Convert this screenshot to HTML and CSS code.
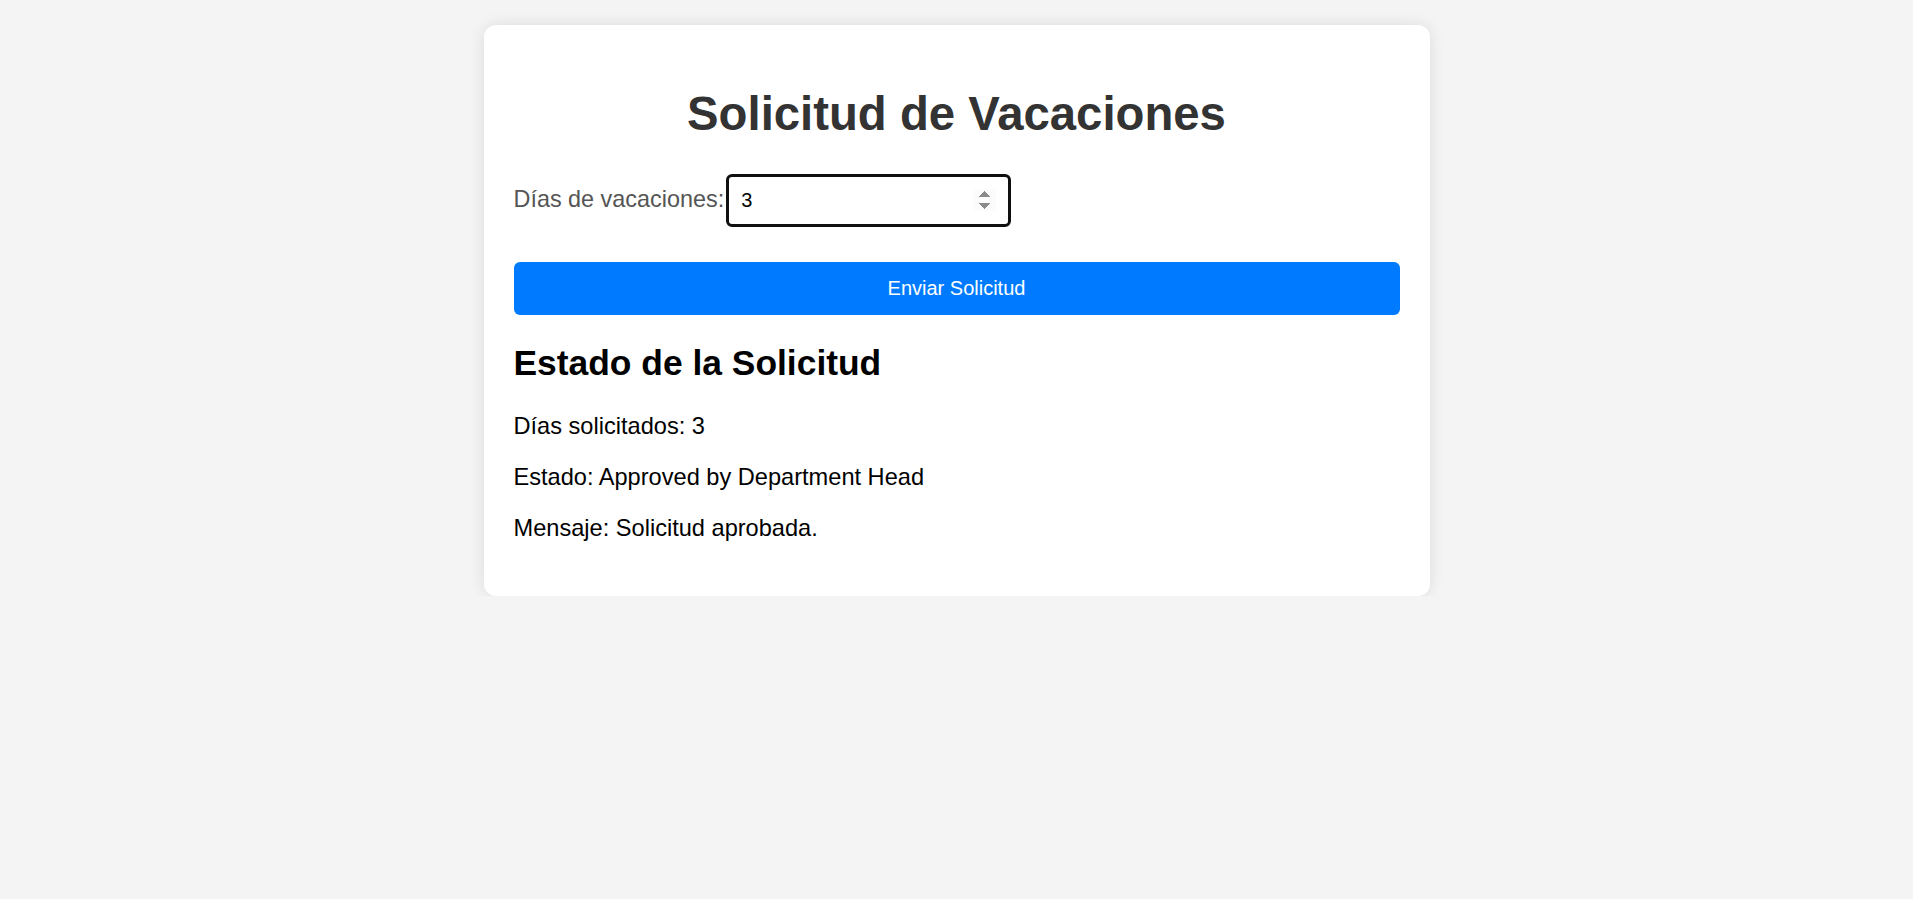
FILE: index.html
```html
<!DOCTYPE html>
<html lang="es">
<head>
<meta charset="utf-8">
<title>Solicitud de Vacaciones</title>
<link rel="stylesheet" href="styles.css">
</head>
<body>
<div class="card">
  <h1 class="title">Solicitud de Vacaciones</h1>
  <form class="form">
    <div class="field">
      <label class="label" for="dias">Días de vacaciones:</label>
      <input class="input" id="dias" type="number" value="3" autofocus>
    </div>
    <button class="submit" type="button">Enviar Solicitud</button>
  </form>
  <div class="status">
    <h2 class="status-title">Estado de la Solicitud</h2>
    <p class="status-line">Días solicitados: 3</p>
    <p class="status-line">Estado: Approved by Department Head</p>
    <p class="status-line">Mensaje: Solicitud aprobada.</p>
  </div>
</div>
</body>
</html>
```
FILE: styles.css
```css
html, body {
  margin: 0;
  padding: 0;
}
body {
  background: #f4f4f4;
  font-family: "Liberation Sans", Arial, sans-serif;
  padding-top: 25px;
}
.card {
  box-sizing: border-box;
  width: 946px;
  margin: 0 auto;
  background: #fff;
  border-radius: 12px;
  box-shadow: 0 0 15px rgba(0, 0, 0, 0.1);
  padding: 30px 30px 30px;
}
.title {
  margin: 31px 0 33px;
  font-size: 47.3px;
  line-height: 55px;
  font-weight: bold;
  color: #333;
  text-align: center;
}
.form {
  margin: 0;
}
.field {
  display: flex;
  align-items: baseline;
  gap: 2px;
}
.label {
  font-size: 23.4px;
  color: #555;
}
.input {
  zoom: 1.5;
  box-sizing: border-box;
  width: 190px;
  font-family: "Liberation Sans", Arial, sans-serif;
  font-size: 13.333px;
  padding: 8px;
  border: 2px solid #101010;
  border-radius: 4px;
  outline: none;
  color: #000;
  caret-color: #000;
  background: #fff;
}
.submit {
  display: block;
  width: 100%;
  height: 53px;
  margin-top: 34.5px;
  border: none;
  border-radius: 6px;
  background: #007bff;
  color: #fff;
  font-family: "Liberation Sans", Arial, sans-serif;
  font-size: 20px;
  cursor: pointer;
}
.status-title {
  margin: 28px 0 29px;
  font-size: 35.4px;
  line-height: 41px;
  font-weight: bold;
  color: #000;
}
.status-line {
  margin: 24px 0;
  font-size: 23.6px;
  line-height: 27.2px;
  color: #000;
}
```
